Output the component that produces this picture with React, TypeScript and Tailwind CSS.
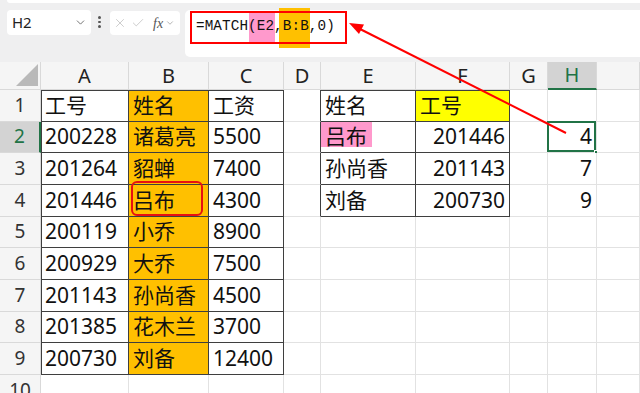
import { X, Check, ChevronDown } from "lucide-react";

const font = "font-['Noto_Sans','Noto_Sans_CJK_SC',sans-serif]";

const colLetters = ["A", "B", "C", "D", "E", "F", "G", "H", ""];

// each row: A..I (9 cells)
const rows: string[][] = [
  ["工号", "姓名", "工资", "", "姓名", "工号", "", "", ""],
  ["200228", "诸葛亮", "5500", "", "吕布", "201446", "", "4", ""],
  ["201264", "貂蝉", "7400", "", "孙尚香", "201143", "", "7", ""],
  ["201446", "吕布", "4300", "", "刘备", "200730", "", "9", ""],
  ["200119", "小乔", "8900", "", "", "", "", "", ""],
  ["200929", "大乔", "7500", "", "", "", "", "", ""],
  ["201143", "孙尚香", "4500", "", "", "", "", "", ""],
  ["201385", "花木兰", "3700", "", "", "", "", "", ""],
  ["200730", "刘备", "12400", "", "", "", "", "", ""],
  ["", "", "", "", "", "", "", "", ""],
];

function inTable(r: number, c: number) {
  if (r >= 1 && r <= 9 && c >= 0 && c <= 2) return true;
  if (r >= 1 && r <= 4 && (c === 4 || c === 5)) return true;
  return false;
}

function Cell({ r, c, text }: { r: number; c: number; text: string }) {
  const table = inTable(r, c);
  const borderCls = table
    ? "border-r border-b border-[#3f3f3f]"
    : c === 3 && r >= 1 && r <= 4
      ? "border-r border-b border-r-[#3f3f3f] border-b-[#e2e2e2]"
      : r === 9 && c <= 2
        ? "border-r border-b border-r-[#e2e2e2] border-b-[#e2e2e2]"
        : "border-r border-b border-[#e2e2e2]";

  let edge = "";
  if (table && r === 1 && c === 0) edge = "shadow-[inset_1px_1px_0_#3f3f3f]";
  else if (table && r === 1) edge = "shadow-[inset_0_1px_0_#3f3f3f]";
  else if (table && c === 0) edge = "shadow-[inset_1px_0_0_#3f3f3f]";

  let bg = "bg-white";
  if (c === 1 && r >= 1 && r <= 9) bg = "bg-[#ffc000]";
  if (c === 5 && r === 1) bg = "bg-[#ffff00]";

  const right = (c === 5 && r >= 2) || c === 7;

  return (
    <div
      className={`relative flex items-center h-[31.67px] text-[21px] leading-none text-[#111] ${bg} ${borderCls} ${edge} ${
        right ? "justify-end pr-[4px]" : "pl-[4px]"
      }`}
    >
      {c === 4 && r === 2 && (
        <div className="absolute left-0 top-0 w-[51px] h-[25px] bg-[#ff99cc]" />
      )}
      <span className="relative whitespace-nowrap">{text}</span>
      {c === 1 && r === 4 && (
        <div className="absolute left-[2px] right-[5px] -top-[4px] bottom-0 border-2 border-[#e81010] rounded-[6px]" />
      )}
      {c === 7 && r === 2 && (
        <>
          <div className="absolute -left-px -top-px right-0 bottom-0 border-2 border-[#217346]" />
          <div className="absolute -right-[3px] -bottom-[3px] w-[5px] h-[5px] bg-[#217346] border border-white" />
        </>
      )}
    </div>
  );
}

export default function App() {
  return (
    <div className={`relative w-[640px] h-[393px] overflow-hidden bg-white ${font}`}>
      {/* toolbar / formula bar */}
      <div className="relative h-[62px] bg-[#efeff0]">
        <div className="absolute left-[7px] top-0 right-0 h-[3px] bg-white rounded-bl-[6px]" />
        <div className="absolute left-[7px] top-[10px] w-[84px] h-[25px] bg-white rounded-[4px] flex items-center pl-[5px] pr-[4px]">
          <span className="text-[15px] text-[#222] flex-1">H2</span>
          <ChevronDown size={13} strokeWidth={1.5} className="text-[#555]" />
        </div>
        <div className="absolute left-[98px] top-[16px] flex flex-col gap-[2px]">
          <div className="w-[2.5px] h-[2.5px] rounded-full bg-[#555]" />
          <div className="w-[2.5px] h-[2.5px] rounded-full bg-[#555]" />
          <div className="w-[2.5px] h-[2.5px] rounded-full bg-[#555]" />
        </div>
        <div className="absolute left-[110px] top-[11px] w-[70px] h-[24px] bg-white rounded-[4px] flex items-center pl-[3px] gap-[4px]">
          <X size={14} strokeWidth={1.3} className="text-[#bdbdbd]" />
          <Check size={14} strokeWidth={1.3} className="text-[#bdbdbd]" />
          <span className="ml-[4px] font-['Liberation_Serif',serif] italic text-[14px] text-[#555]">
            fx
          </span>
          <ChevronDown size={10} strokeWidth={1.5} className="text-[#888] -ml-[2px]" />
        </div>
        <div className="absolute left-[185px] top-[10px] right-0 h-[47px] bg-white rounded-l-[5px]">
          <div className="absolute left-[94px] -top-[2px] w-[31px] h-[40px] bg-[#ffc000]" />
          <div className="absolute left-[64px] top-[3px] w-[26px] h-[30px] bg-[#ff99cc]" />
          <div className="absolute left-[5px] top-[1px] w-[157px] h-[33px] border-2 border-[#ff0000]" />
          <div className="absolute left-[11px] top-[6px] font-['Liberation_Mono',monospace] text-[14.3px] leading-[20px] text-[#111] tracking-[0.1px]">
            =MATCH(E2,B:B,0)
          </div>
        </div>
      </div>

      {/* sheet grid */}
      <div className="grid grid-cols-[41px_88px_80px_75px_37px_95px_94px_38px_49px_1fr]">
        {/* header row */}
        <div className="relative h-[28px] bg-[#f5f5f5] border-r border-b border-[#d9d9d9]">
          <div className="absolute right-[2px] bottom-[3px] w-0 h-0 border-l-[22px] border-l-transparent border-b-[22px] border-b-[#b9b9b9]" />
        </div>
        {colLetters.map((l, i) =>
          l === "H" ? (
            <div
              key={i}
              className="h-[28px] flex items-center justify-center text-[20px] leading-none text-[#217346] bg-[#d3d3d3] border-r border-[#d9d9d9] border-b-2 border-b-[#217346]"
            >
              {l}
            </div>
          ) : (
            <div
              key={i}
              className="h-[28px] flex items-center justify-center text-[20px] leading-none text-[#222] bg-[#f5f5f5] border-r border-b border-[#d9d9d9]"
            >
              {l}
            </div>
          ),
        )}

        {rows.map((row, r) => [
          r === 1 ? (
            <div
              key={`h${r}`}
              className="h-[31.67px] flex items-center justify-center text-[19px] leading-none text-[#217346] bg-[#d3d3d3] border-b border-[#d9d9d9] border-r-2 border-r-[#217346]"
            >
              {r + 1}
            </div>
          ) : (
            <div
              key={`h${r}`}
              className="h-[31.67px] flex items-center justify-center text-[19px] leading-none text-[#333] bg-[#f5f5f5] border-r border-b border-[#d9d9d9]"
            >
              {r + 1}
            </div>
          ),
          ...row.map((t, c) => <Cell key={`${r}-${c}`} r={r + 1} c={c} text={t} />),
        ])}
      </div>

      {/* red arrow */}
      <svg
        className="absolute left-0 top-0 pointer-events-none"
        width="640"
        height="393"
        viewBox="0 0 640 393"
      >
        <line x1="566" y1="133" x2="360" y2="29" stroke="#ff0000" strokeWidth="2" />
        <polygon points="349,23 364,24.5 359,34" fill="#ff0000" />
      </svg>
    </div>
  );
}
